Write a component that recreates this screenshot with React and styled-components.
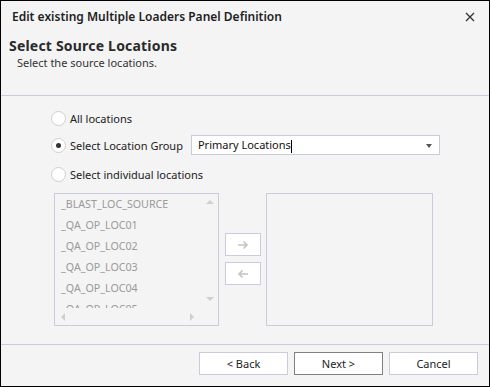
import React from "react";
import styled, { createGlobalStyle } from "styled-components";

const Global = createGlobalStyle`
  html, body { margin: 0; padding: 0; background: #ffffff; }
  * { box-sizing: border-box; }
`;

const FONT = `"Noto Sans", "Open Sans", "Liberation Sans", sans-serif`;

const Dialog = styled.div`
  width: 490px;
  height: 387px;
  border: 1px solid #000;
  background: #f4f4f4;
  display: flex;
  flex-direction: column;
  font-family: ${FONT};
  color: #1e1e1e;
`;

const Header = styled.div`
  height: 95px;
  display: flex;
  flex-direction: column;
  border-bottom: 1px solid #cbcbdf;
`;

const TitleBar = styled.div`
  height: 31px;
  display: flex;
  align-items: center;
  justify-content: space-between;
  padding: 0 12px 0 11px;
`;

const Title = styled.div`
  font-size: 12px;
  font-weight: 600;
`;

const Close = styled.div`
  width: 12px;
  height: 12px;
  display: flex;
  align-items: center;
  justify-content: center;
  margin-right: 1px;
`;

const SectionTitle = styled.div`
  margin-top: 5px;
  padding-left: 8px;
  font-size: 14px;
  line-height: 17px;
  font-weight: 700;
  color: #2a2a2a;
  letter-spacing: 0.2px;
`;

const SectionSub = styled.div`
  margin-top: 2px;
  padding-left: 16px;
  font-size: 11px;
  line-height: 14px;
  color: #333;
`;

const Content = styled.div`
  flex: 1;
  display: flex;
  flex-direction: column;
  padding: 14px 0 0 50px;
  border-bottom: 1px solid #cbcbdf;
`;

const RadioRow = styled.div`
  display: flex;
  align-items: center;
  height: ${(p) => p.$h}px;
  margin-top: ${(p) => p.$mt || 0}px;
  font-size: 11px;
  color: #222;
`;

const Radio = styled.span`
  width: 15px;
  height: 15px;
  border-radius: 50%;
  border: 1px solid #cfcfcf;
  background: #fff;
  margin-right: 4px;
  display: flex;
  align-items: center;
  justify-content: center;
  &::after {
    content: "";
    width: 5px;
    height: 5px;
    border-radius: 50%;
    background: ${(p) => (p.$checked ? "#333" : "transparent")};
  }
`;

const Combo = styled.div`
  margin-left: 8px;
  width: 249px;
  height: 20px;
  background: #fff;
  border: 1px solid #cbcbdf;
  display: flex;
  align-items: center;
  justify-content: space-between;
  padding: 0 7px 0 6px;
  font-size: 11px;
  color: #111;
`;

const Caret = styled.span`
  display: inline-block;
  width: 1px;
  height: 13px;
  background: #000;
  vertical-align: middle;
`;

const DropArrow = styled.span`
  width: 0;
  height: 0;
  border-left: 3.5px solid transparent;
  border-right: 3.5px solid transparent;
  border-top: 4px solid #555;
  margin-top: 2px;
`;

const ListsRow = styled.div`
  display: flex;
  align-items: flex-start;
  margin-top: 10px;
  margin-left: 3px;
`;

const ListBox = styled.div`
  position: relative;
  width: ${(p) => p.$w}px;
  height: 133px;
  border: 1px solid #cbcbdf;
  background: #f4f4f4;
  overflow: hidden;
`;

const Items = styled.div`
  padding: 0 0 0 6px;
  display: flex;
  flex-direction: column;
`;

const Item = styled.div`
  height: 21px;
  line-height: 21px;
  font-size: 10.7px;
  color: #9a9a9a;
  white-space: nowrap;
`;

const VScroll = styled.div`
  position: absolute;
  top: 0;
  right: 0;
  width: 17px;
  height: 114px;
  background: #f4f4f4;
  display: flex;
  flex-direction: column;
  justify-content: space-between;
  align-items: center;
  padding: 6px 0 7px;
`;

const HScroll = styled.div`
  position: absolute;
  left: 0;
  bottom: 0;
  width: 100%;
  height: 17px;
  background: #f4f4f4;
  display: flex;
  justify-content: space-between;
  align-items: center;
  padding: 0 24px 0 6px;
`;

const Tri = styled.span`
  width: 0;
  height: 0;
  ${(p) =>
    p.$dir === "up"
      ? `border-left:4px solid transparent;border-right:4px solid transparent;border-bottom:4px solid #cfcfcf;`
      : p.$dir === "down"
      ? `border-left:4px solid transparent;border-right:4px solid transparent;border-top:4px solid #cfcfcf;`
      : p.$dir === "left"
      ? `border-top:4px solid transparent;border-bottom:4px solid transparent;border-right:4px solid #cfcfcf;`
      : `border-top:4px solid transparent;border-bottom:4px solid transparent;border-left:4px solid #cfcfcf;`}
`;

const MoveCol = styled.div`
  width: 47px;
  padding-top: 40px;
  display: flex;
  flex-direction: column;
  align-items: center;
  gap: 6px;
`;

const MoveBtn = styled.div`
  width: 36px;
  height: 23px;
  border: 1px solid #cbcbdf;
  background: #fff;
  display: flex;
  align-items: center;
  justify-content: center;
`;

const Footer = styled.div`
  height: 41px;
  display: flex;
  justify-content: flex-end;
  align-items: flex-start;
  gap: 6px;
  padding: 7px 11px 0 0;
`;

const Button = styled.div`
  width: 89px;
  height: 23px;
  border: 1px solid ${(p) => (p.$primary ? "#808080" : "#cbcbdf")};
  background: #fff;
  display: flex;
  align-items: center;
  justify-content: center;
  font-size: 11px;
  color: #222;
`;

const Arrow = ({ left }) => (
  <svg width="12" height="10" viewBox="0 0 12 10">
    {left ? (
      <path d="M11 5H2M5.5 1.5L2 5l3.5 3.5" stroke="#c4c4c4" strokeWidth="1.6" fill="none" />
    ) : (
      <path d="M1 5h9M6.5 1.5L10 5 6.5 8.5" stroke="#c4c4c4" strokeWidth="1.6" fill="none" />
    )}
  </svg>
);

const items = [
  "_BLAST_LOC_SOURCE",
  "_QA_OP_LOC01",
  "_QA_OP_LOC02",
  "_QA_OP_LOC03",
  "_QA_OP_LOC04",
  "_QA_OP_LOC05",
];

export default function App() {
  return (
    <>
      <Global />
      <Dialog>
        <Header>
          <TitleBar>
            <Title>Edit existing Multiple Loaders Panel Definition</Title>
            <Close>
              <svg width="10" height="10" viewBox="0 0 10 10">
                <path d="M1 1l8 8M9 1L1 9" stroke="#333" strokeWidth="1.3" />
              </svg>
            </Close>
          </TitleBar>
          <SectionTitle>Select Source Locations</SectionTitle>
          <SectionSub>Select the source locations.</SectionSub>
        </Header>
        <Content>
          <RadioRow $h={17}>
            <Radio />
            All locations
          </RadioRow>
          <RadioRow $h={20} $mt={8}>
            <Radio $checked />
            Select Location Group
            <Combo>
              <span>
                Primary Locations
                <Caret />
              </span>
              <DropArrow />
            </Combo>
          </RadioRow>
          <RadioRow $h={17} $mt={11}>
            <Radio />
            Select individual locations
          </RadioRow>
          <ListsRow>
            <ListBox $w={165}>
              <Items>
                {items.map((t) => (
                  <Item key={t}>{t}</Item>
                ))}
              </Items>
              <VScroll>
                <Tri $dir="up" />
                <Tri $dir="down" />
              </VScroll>
              <HScroll>
                <Tri $dir="left" />
                <Tri $dir="right" />
              </HScroll>
            </ListBox>
            <MoveCol>
              <MoveBtn>
                <Arrow />
              </MoveBtn>
              <MoveBtn>
                <Arrow left />
              </MoveBtn>
            </MoveCol>
            <ListBox $w={167} />
          </ListsRow>
        </Content>
        <Footer>
          <Button>&lt; Back</Button>
          <Button $primary>Next &gt;</Button>
          <Button>Cancel</Button>
        </Footer>
      </Dialog>
    </>
  );
}
